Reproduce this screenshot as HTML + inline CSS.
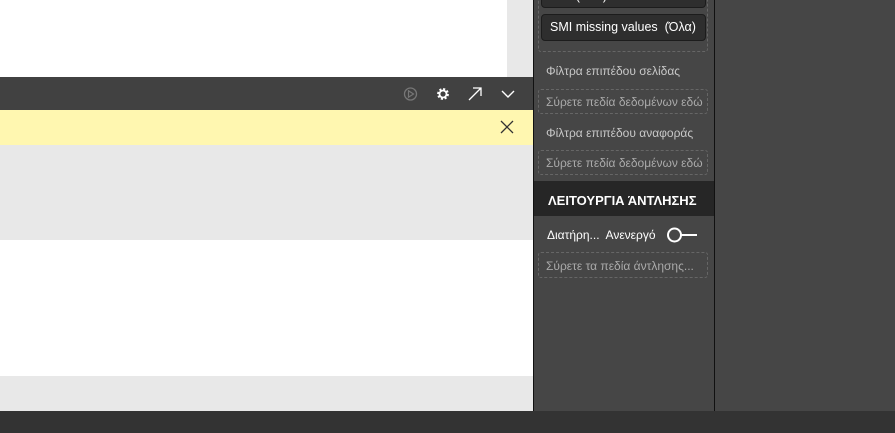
<!DOCTYPE html>
<html><head><meta charset="utf-8"><style>
*{margin:0;padding:0;box-sizing:border-box}
body{width:895px;height:433px;overflow:hidden;background:#464646;font-family:"Liberation Sans","DejaVu Sans",sans-serif;position:relative}
.a{position:absolute}
.t{color:#c8c8c8;font-size:12px;white-space:nowrap}
.dash{border:1px dashed #666;border-radius:3px}
</style></head><body>
<div class="a" style="left:0;top:0;width:533px;height:77px;background:#e8e8e8"></div>
<div class="a" style="left:0;top:0;width:507px;height:77px;background:#fff"></div>
<div class="a" style="left:0;top:77px;width:533px;height:33px;background:#414141"></div>
<svg class="a" style="left:400px;top:82px" width="125" height="24" viewBox="0 0 125 24">
<circle cx="10.5" cy="12" r="6" fill="none" stroke="#777" stroke-width="1.3"/>
<path d="M8.5 8.8 L13.5 12 L8.5 15.2Z" fill="none" stroke="#777" stroke-width="1.2"/>
<circle cx="43" cy="12" r="4.6" fill="none" stroke="#fff" stroke-width="2.6" stroke-dasharray="2 1.6"/>
<circle cx="43" cy="12" r="3.5" fill="none" stroke="#fff" stroke-width="1.8"/>
<path d="M69 18 L81 6 M73 6 H81 V14" fill="none" stroke="#fff" stroke-width="1.3"/>
<path d="M102 9 L108 15 L114 9" fill="none" stroke="#fff" stroke-width="1.4"/>
</svg>
<div class="a" style="left:0;top:110px;width:533px;height:35px;background:#fff7b0"></div>
<svg class="a" style="left:500px;top:120px" width="14" height="14"><path d="M1 1L13 13M13 1L1 13" stroke="#333" stroke-width="1.3"/></svg>
<div class="a" style="left:0;top:145px;width:533px;height:95px;background:#e8e8e8"></div>
<div class="a" style="left:0;top:240px;width:533px;height:136px;background:#fff"></div>
<div class="a" style="left:0;top:376px;width:533px;height:35px;background:#e8e8e8"></div>
<div class="a" style="left:533px;top:0;width:1px;height:411px;background:#111"></div>
<div class="a" style="left:714px;top:0;width:1px;height:411px;background:#111"></div>
<div class="a dash" style="left:538px;top:-10px;width:170px;height:62px"></div>
<div class="a" style="left:541px;top:-20px;width:165px;height:28px;background:#2e2e2e;border:1px solid #1c1c1c;border-radius:4px;color:#fff;font-size:12.5px;padding:8px 0 0 8px">SMI (Όλα)</div>
<div class="a" style="left:541px;top:14px;width:165px;height:27px;background:#2e2e2e;border:1px solid #1c1c1c;border-radius:4px;color:#fff;font-size:12.5px;padding:5px 0 0 8px">SMI missing values&nbsp; (Όλα)</div>
<div class="a t" style="left:546px;top:64px">Φίλτρα επιπέδου σελίδας</div>
<div class="a dash t" style="left:538px;top:89px;width:170px;height:25px;padding:5px 0 0 7px;color:#aaa">Σύρετε πεδία δεδομένων εδώ</div>
<div class="a t" style="left:546px;top:126px">Φίλτρα επιπέδου αναφοράς</div>
<div class="a dash t" style="left:538px;top:150px;width:170px;height:25px;padding:5px 0 0 7px;color:#aaa">Σύρετε πεδία δεδομένων εδώ</div>
<div class="a" style="left:534px;top:181px;width:180px;height:35px;background:#262626;color:#fff;font-weight:bold;font-size:13px;padding:12px 0 0 14px;white-space:nowrap">ΛΕΙΤΟΥΡΓΙΑ ΆΝΤΛΗΣΗΣ</div>
<div class="a t" style="left:547px;top:228px;color:#fff;font-size:12px">Διατήρη...&nbsp; Ανενεργό</div>
<svg class="a" style="left:665px;top:226px" width="34" height="18"><circle cx="9.5" cy="9" r="6.5" fill="none" stroke="#fff" stroke-width="2"/><path d="M16 9H32" stroke="#fff" stroke-width="2"/></svg>
<div class="a dash t" style="left:538px;top:252px;width:170px;height:26px;padding:6px 0 0 7px;color:#aaa">Σύρετε τα πεδία άντλησης...</div>
<div class="a" style="left:0;top:411px;width:895px;height:22px;background:#333"></div>
</body></html>
